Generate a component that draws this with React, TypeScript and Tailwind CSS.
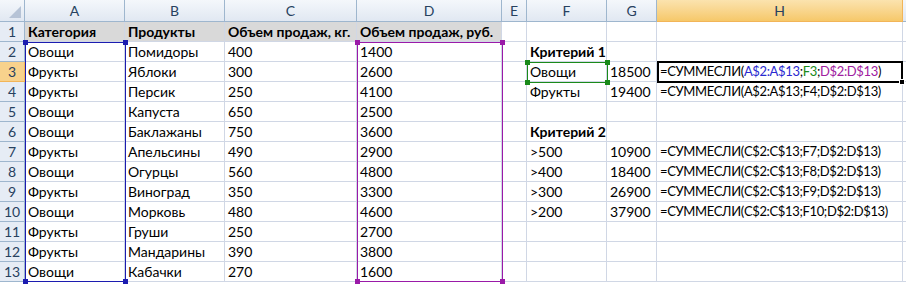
import React from "react";

const cols = ["A", "B", "C", "D", "E", "F", "G", "H", ""];
const colW = [100, 100, 132, 145, 25, 80, 50, 246, 10];

type Cell = { t: React.ReactNode; b?: boolean; fx?: boolean };

const f = (a: string, crit: string, sum: string): Cell => ({ t: `=СУММЕСЛИ(${a};${crit};${sum})`, fx: true });

const rows: (string | Cell)[][] = [
  [{ t: "Категория", b: true }, { t: "Продукты", b: true }, { t: "Объем продаж, кг.", b: true }, { t: "Объем продаж, руб.", b: true }, "", "", "", ""],
  ["Овощи", "Помидоры", "400", "1400", "", { t: "Критерий 1", b: true }, "", ""],
  [
    "Фрукты", "Яблоки", "300", "2600", "", "Овощи", "18500",
    {
      fx: true,
      t: (
        <>
          =СУММЕСЛИ(<span className="text-[#2a2ad0]">A$2:A$13</span>;<span className="text-[#1a8a1a]">F3</span>;
          <span className="text-[#a020a0]">D$2:D$13</span>)
        </>
      ),
    },
  ],
  ["Фрукты", "Персик", "250", "4100", "", "Фрукты", "19400", f("A$2:A$13", "F4", "D$2:D$13")],
  ["Овощи", "Капуста", "650", "2500", "", "", "", ""],
  ["Овощи", "Баклажаны", "750", "3600", "", { t: "Критерий 2", b: true }, "", ""],
  ["Фрукты", "Апельсины", "490", "2900", "", ">500", "10900", f("C$2:C$13", "F7", "D$2:D$13")],
  ["Овощи", "Огурцы", "560", "4800", "", ">400", "18400", f("C$2:C$13", "F8", "D$2:D$13")],
  ["Фрукты", "Виноград", "350", "3300", "", ">300", "26900", f("C$2:C$13", "F9", "D$2:D$13")],
  ["Овощи", "Морковь", "480", "4600", "", ">200", "37900", f("C$2:C$13", "F10", "D$2:D$13")],
  ["Фрукты", "Груши", "250", "2700", "", "", "", ""],
  ["Фрукты", "Мандарины", "390", "3800", "", "", "", ""],
  ["Овощи", "Кабачки", "270", "1600", "", "", "", ""],
];

// colored reference frame drawn over the sheet, with square handles at its corners
function RangeBox({ className, color }: { className: string; color: string }) {
  const h = `absolute h-[5px] w-[5px] ${color}`;
  return (
    <div className={`pointer-events-none absolute border ${className}`}>
      <div className={`${h} -left-[3px] -top-[3px]`} />
      <div className={`${h} -right-[3px] -top-[3px]`} />
      <div className={`${h} -bottom-[3px] -left-[3px]`} />
      <div className={`${h} -bottom-[3px] -right-[3px]`} />
    </div>
  );
}

export default function App() {
  const gridCols = `25px ${colW.map((w) => w + "px").join(" ")}`;
  return (
    <div
      className="relative h-[285px] w-[906px] overflow-hidden bg-white text-[14px] text-black"
      style={{ fontFamily: "Lato, 'Liberation Sans', sans-serif" }}
    >
      <div className="grid" style={{ gridTemplateColumns: gridCols, gridTemplateRows: "22px", gridAutoRows: "20px" }}>
        {/* corner */}
        <div className="flex items-end justify-end border-b border-r border-[#9eb6ce] bg-gradient-to-b from-[#f4f7fb] to-[#e1e8f2] p-[3px]">
          <div className="h-0 w-0 border-b-[12px] border-l-[12px] border-b-[#b6c3d6] border-l-transparent" />
        </div>
        {cols.map((c, i) => (
          <div
            key={i}
            className={`flex items-center justify-center border-b border-r text-[14px] text-[#27415f] ${
              c === "H"
                ? "border-[#f2b558] bg-gradient-to-b from-[#fbe3ae] to-[#f6c869]"
                : "border-[#9eb6ce] bg-gradient-to-b from-[#f4f7fb] to-[#e1e8f2]"
            }`}
          >
            {c}
          </div>
        ))}
        {rows.map((r, ri) => (
          <React.Fragment key={ri}>
            <div
              className={`flex items-center justify-center border-b border-r text-[14px] text-[#27415f] ${
                ri === 2 ? "border-[#f2b558] bg-[#f8d28c]" : "border-[#9eb6ce] bg-[#e6ecf5]"
              }`}
            >
              {ri + 1}
            </div>
            {[...r, ""].map((cell, ci) => {
              const c: Cell = typeof cell === "string" ? { t: cell } : cell;
              return (
                <div
                  key={ci}
                  className={`flex items-end whitespace-nowrap border-b border-r border-[#d0d7e5] pb-[1px] pl-[3px] leading-[17px] ${
                    ri === 0 && ci < 4 ? "bg-[#d9d9d9]" : ""
                  } ${c.b ? "font-bold" : ""} ${c.fx ? "text-[13px] tracking-[-0.35px]" : ""}`}
                >
                  {c.t}
                </div>
              );
            })}
          </React.Fragment>
        ))}
      </div>

      <RangeBox className="left-[25px] top-[42px] h-[240px] w-[101px] border-[#1c1cb0]" color="bg-[#1c1cb0]" />
      <RangeBox className="left-[357px] top-[42px] h-[240px] w-[146px] border-[#9a1aa8]" color="bg-[#9a1aa8]" />
      <RangeBox className="left-[527px] top-[62px] h-[21px] w-[81px] border-[#1a8a1a]" color="bg-[#1a8a1a]" />

      {/* active cell H3 with fill handle */}
      <div className="pointer-events-none absolute left-[657px] top-[61px] h-[22px] w-[246px] border-2 border-black">
        <div className="absolute -bottom-[4px] -right-[4px] h-[6px] w-[6px] border border-white bg-black" />
      </div>
    </div>
  );
}
